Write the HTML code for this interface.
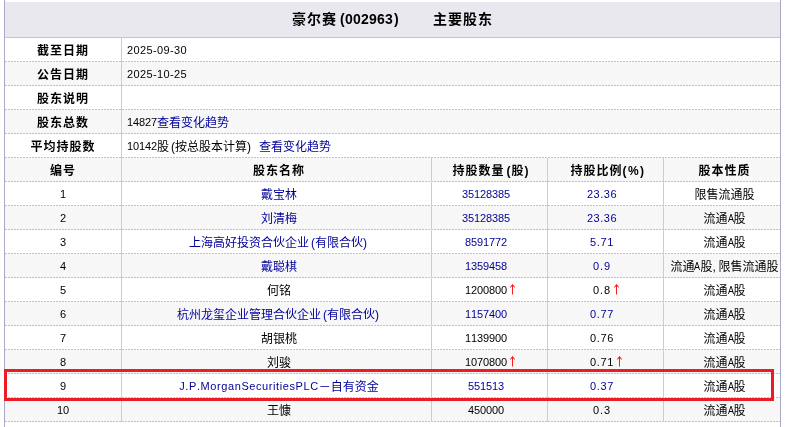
<!DOCTYPE html>
<html lang="zh-CN">
<head>
<meta charset="utf-8">
<title>豪尔赛(002963) 主要股东</title>
<style>
html,body{margin:0;padding:0;background:#fff;}
body{width:787px;height:427px;position:relative;overflow:hidden;
  font-family:"Liberation Sans","Noto Sans CJK SC",sans-serif;font-size:12px;color:#000;font-kerning:none;}
#wrap{will-change:transform;position:absolute;left:4px;top:0;width:777px;height:427px;box-sizing:border-box;
  border-left:1px solid #a9abc6;border-right:1px solid #a9abc6;}
#title{position:absolute;left:0;top:2px;width:775px;height:36px;box-sizing:border-box;
  background:#e8e8ee;border-bottom:1px solid #c4c4d6;text-align:center;
  font-size:14px;font-weight:bold;line-height:34px;letter-spacing:1px;white-space:pre;}
.r{position:absolute;left:0;width:775px;height:24px;box-sizing:border-box;}
.r.g{background:#f7f7f7;}
.r:after{content:"";position:absolute;left:0;right:0;bottom:0;height:1px;
  background:repeating-linear-gradient(90deg,#c2c2c2 0,#c2c2c2 2px,transparent 2px,transparent 3px);}
.c{position:absolute;top:2px;height:21px;line-height:23px;box-sizing:border-box;text-align:center;white-space:nowrap;}
.c1{left:0;width:116px;}
.c2{left:117px;width:309px;padding-left:5px;}
.c3{left:427px;width:115px;padding-left:5px;}
.c4{left:543px;width:115px;padding-left:5px;}
.c5{left:659px;width:116px;padding-left:5px;}
.cv{left:117px;width:658px;padding-left:5px;text-align:left;}
.gap{display:inline-block;width:32px;}
.t1{padding-left:3px;letter-spacing:0.34px;}
.t2{letter-spacing:0.22px;}
.t3{padding-left:1px;padding-right:2.34px;letter-spacing:0;}
.b{font-weight:bold;letter-spacing:1px;}
.vl{position:absolute;width:1px;background:#ccccd8;}
a{color:#000099;text-decoration:none;}
.n,.dt,.d5,.d4,.d3,.jp,.la{font-size:11px;position:relative;top:-1px;}
.n{letter-spacing:-0.117px;}
.dt{letter-spacing:0.373px;}
.d5{letter-spacing:0.494px;}
.d4{letter-spacing:0.647px;}
.d3{letter-spacing:0.9px;}
.pl{padding-left:2px;}
.pr{padding-right:2px;}
.cm{letter-spacing:2.66px;}
.jp{letter-spacing:0.586px;}
.la{display:inline-block;width:6px;transform:scaleX(.82);transform-origin:0 50%;}
.sp{display:inline-block;width:12px;text-align:center;color:#ff0000;letter-spacing:0;font-family:"IPAGothic","Noto Sans CJK SC",sans-serif;font-size:12px;line-height:12px;vertical-align:0;position:relative;left:-0.5px;top:-1px;}
#red{position:absolute;left:4px;top:369px;width:770px;height:32px;box-sizing:border-box;border:3px solid #ed1c24;}
</style>
</head>
<body>
<div id="wrap">
  <div id="title">豪尔赛<span class="t1">(</span><span class="t2">002963</span><span class="t3">)</span><span class="gap"></span>主要股东</div>

  <div class="r" style="top:38px"><div class="c c1 b">截至日期</div><div class="c cv"><span class="dt">2025-09-30</span></div></div>
  <div class="r g" style="top:62px"><div class="c c1 b">公告日期</div><div class="c cv"><span class="dt">2025-10-25</span></div></div>
  <div class="r" style="top:86px"><div class="c c1 b">股东说明</div><div class="c cv"></div></div>
  <div class="r g" style="top:110px"><div class="c c1 b">股东总数</div><div class="c cv"><span class="n">14827</span><a>查看变化趋势</a></div></div>
  <div class="r" style="top:134px"><div class="c c1 b">平均持股数</div><div class="c cv"><span class="n">10142</span>股<span class="pl">(</span>按总股本计算<span class="pr">)</span><span class="cm"> </span><a>查看变化趋势</a></div></div>

  <div class="r g" style="top:158px"><div class="c c1 b">编号</div><div class="c c2 b">股东名称</div><div class="c c3 b">持股数量<span class="pl">(</span>股<span class="pr">)</span></div><div class="c c4 b">持股比例<span style="letter-spacing:1.4px">(%)</span></div><div class="c c5 b">股本性质</div></div>

  <div class="r" style="top:182px"><div class="c c1"><span class="n">1</span></div><div class="c c2"><a>戴宝林</a></div><div class="c c3"><a class="n">35128385</a><span class="sp"></span></div><div class="c c4"><a class="d5">23.36</a><span class="sp"></span></div><div class="c c5">限售流通股</div></div>
  <div class="r g" style="top:206px"><div class="c c1"><span class="n">2</span></div><div class="c c2"><a>刘清梅</a></div><div class="c c3"><a class="n">35128385</a><span class="sp"></span></div><div class="c c4"><a class="d5">23.36</a><span class="sp"></span></div><div class="c c5">流通<span class="la">A</span>股</div></div>
  <div class="r" style="top:230px"><div class="c c1"><span class="n">3</span></div><div class="c c2"><a>上海高好投资合伙企业<span class="pl">(</span>有限合伙<span class="pr">)</span></a></div><div class="c c3"><a class="n">8591772</a><span class="sp"></span></div><div class="c c4"><a class="d4">5.71</a><span class="sp"></span></div><div class="c c5">流通<span class="la">A</span>股</div></div>
  <div class="r g" style="top:254px"><div class="c c1"><span class="n">4</span></div><div class="c c2"><a>戴聪棋</a></div><div class="c c3"><a class="n">1359458</a><span class="sp"></span></div><div class="c c4"><a class="d3">0.9</a><span class="sp"></span></div><div class="c c5">流通<span class="la">A</span>股<span class="cm">,</span>限售流通股</div></div>
  <div class="r" style="top:278px"><div class="c c1"><span class="n">5</span></div><div class="c c2">何铭</div><div class="c c3"><span class="n">1200800</span><span class="sp">↑</span></div><div class="c c4"><span class="d3">0.8</span><span class="sp">↑</span></div><div class="c c5">流通<span class="la">A</span>股</div></div>
  <div class="r g" style="top:302px"><div class="c c1"><span class="n">6</span></div><div class="c c2"><a>杭州龙玺企业管理合伙企业<span class="pl">(</span>有限合伙<span class="pr">)</span></a></div><div class="c c3"><a class="n">1157400</a><span class="sp"></span></div><div class="c c4"><a class="d4">0.77</a><span class="sp"></span></div><div class="c c5">流通<span class="la">A</span>股</div></div>
  <div class="r" style="top:326px"><div class="c c1"><span class="n">7</span></div><div class="c c2">胡银桃</div><div class="c c3"><span class="n">1139900</span><span class="sp"></span></div><div class="c c4"><span class="d4">0.76</span><span class="sp"></span></div><div class="c c5">流通<span class="la">A</span>股</div></div>
  <div class="r g" style="top:350px"><div class="c c1"><span class="n">8</span></div><div class="c c2">刘骏</div><div class="c c3"><span class="n">1070800</span><span class="sp">↑</span></div><div class="c c4"><span class="d4">0.71</span><span class="sp">↑</span></div><div class="c c5">流通<span class="la">A</span>股</div></div>
  <div class="r" style="top:374px"><div class="c c1"><span class="n">9</span></div><div class="c c2"><a><span class="jp">J.P.MorganSecuritiesPLC</span>－自有资金</a></div><div class="c c3"><a class="n">551513</a><span class="sp"></span></div><div class="c c4"><a class="d4">0.37</a><span class="sp"></span></div><div class="c c5">流通<span class="la">A</span>股</div></div>
  <div class="r g" style="top:398px"><div class="c c1"><span class="n">10</span></div><div class="c c2">王慷</div><div class="c c3"><span class="n">450000</span><span class="sp"></span></div><div class="c c4"><span class="d3">0.3</span><span class="sp"></span></div><div class="c c5">流通<span class="la">A</span>股</div></div>

  <div class="vl" style="left:116px;top:38px;height:384px"></div>
  <div class="vl" style="left:426px;top:158px;height:264px"></div>
  <div class="vl" style="left:542px;top:158px;height:264px"></div>
  <div class="vl" style="left:658px;top:158px;height:264px"></div>
</div>
<div id="red"></div>
</body>
</html>
